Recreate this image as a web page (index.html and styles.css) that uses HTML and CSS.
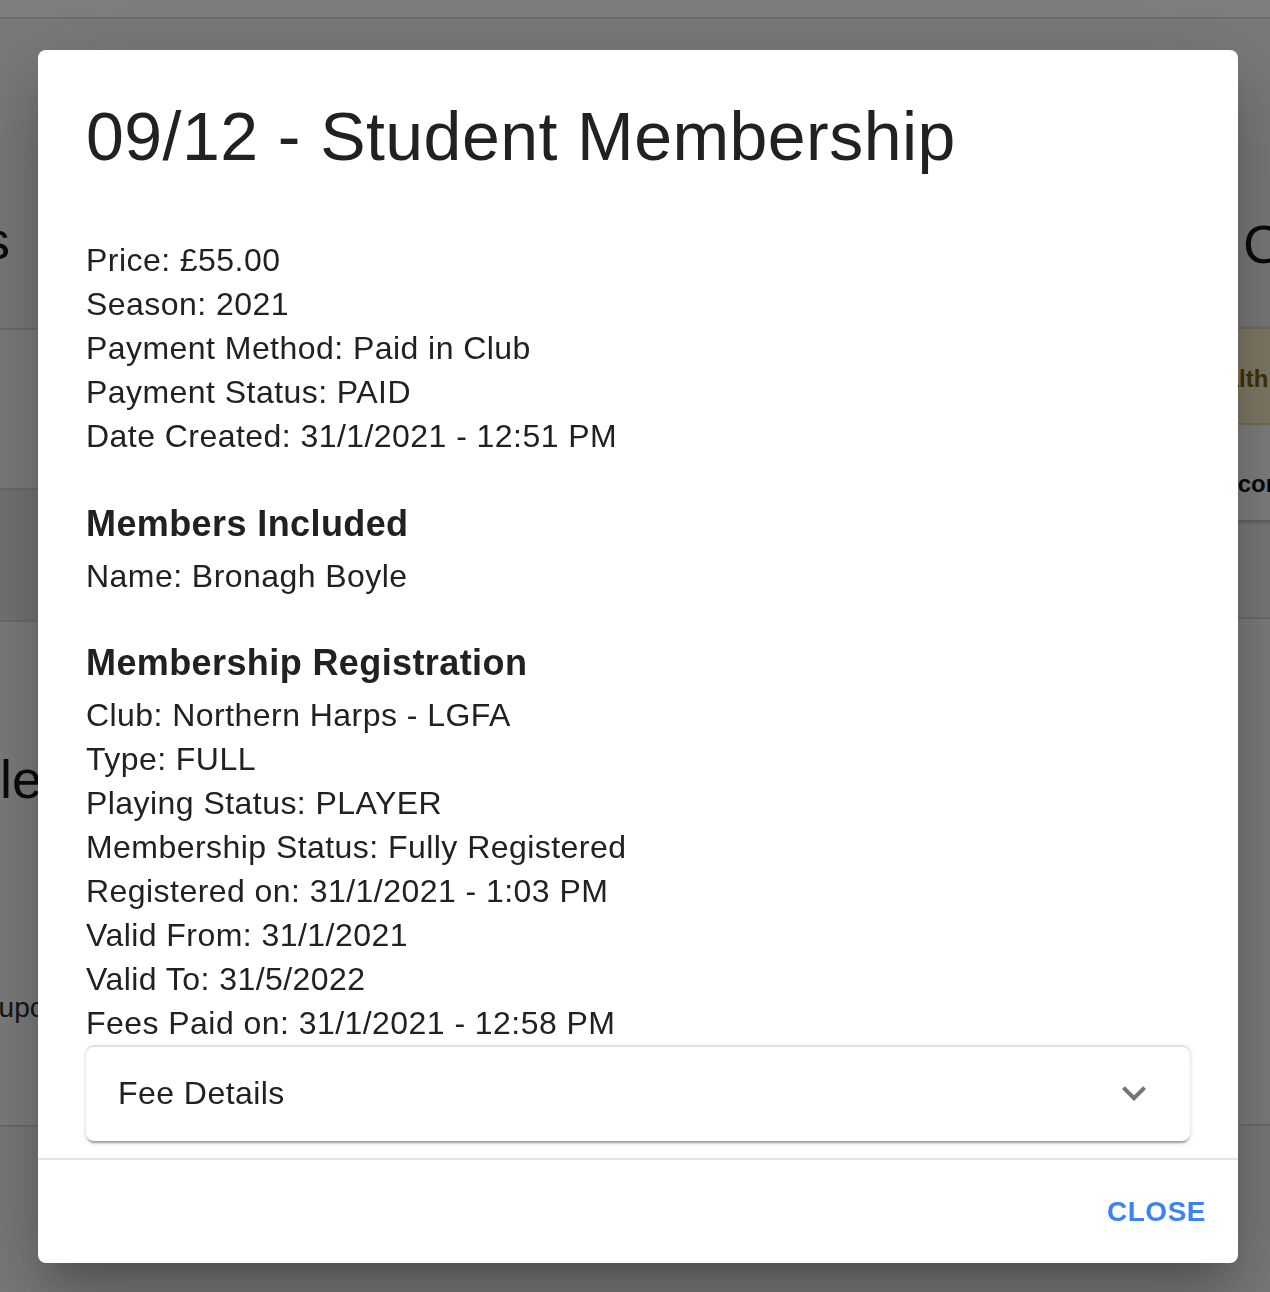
FILE: index.html
```html
<!DOCTYPE html>
<html lang="en">
<head>
<meta charset="utf-8">
<title>09/12 - Student Membership</title>
<link rel="stylesheet" href="styles.css">
</head>
<body>
<div class="page">
  <header class="topbar"></header>
  <div class="cols">
    <div class="col col-left">
      <div class="l-head"><h2 class="bg-title">Memberships</h2></div>
      <div class="l-row l-row-a"></div>
      <div class="l-row l-row-b"></div>
      <div class="l-sec">
        <h2 class="bg-title bg-title-2">Schedule</h2>
        <p class="bg-text">No upcoming fixtures</p>
      </div>
      <div class="l-foot"></div>
    </div>
    <div class="col col-right">
      <div class="r-head"><h2 class="bg-title">Contact</h2></div>
      <div class="r-card">
        <div class="r-alert">Health declaration</div>
        <div class="r-row">Recorded by</div>
      </div>
      <div class="r-sec"></div>
      <div class="r-foot"></div>
    </div>
  </div>
</div>

<div class="backdrop"></div>

<div class="dialog-wrap">
  <div class="dialog" role="dialog" aria-labelledby="dlg-title">
    <h2 class="dialog-title" id="dlg-title">09/12 - Student Membership</h2>
    <div class="dialog-content">
      <p class="line">Price: £55.00</p>
      <p class="line">Season: 2021</p>
      <p class="line">Payment Method: Paid in Club</p>
      <p class="line">Payment Status: PAID</p>
      <p class="line">Date Created: 31/1/2021 - 12:51 PM</p>

      <h3 class="section">Members Included</h3>
      <p class="line">Name: Bronagh Boyle</p>

      <h3 class="section section-2">Membership Registration</h3>
      <p class="line">Club: Northern Harps - LGFA</p>
      <p class="line">Type: FULL</p>
      <p class="line">Playing Status: PLAYER</p>
      <p class="line">Membership Status: Fully Registered</p>
      <p class="line">Registered on: 31/1/2021 - 1:03 PM</p>
      <p class="line">Valid From: 31/1/2021</p>
      <p class="line">Valid To: 31/5/2022</p>
      <p class="line">Fees Paid on: 31/1/2021 - 12:58 PM</p>

      <div class="accordion">
        <div class="acc-summary">
          <span class="acc-label">Fee Details</span>
          <svg class="acc-icon" viewBox="0 0 24 24" width="48" height="48" aria-hidden="true">
            <path d="M16.59 8.59L12 13.17 7.41 8.59 6 10l6 6 6-6z"></path>
          </svg>
        </div>
      </div>
    </div>
    <div class="dialog-actions">
      <button class="btn-text" type="button">Close</button>
    </div>
  </div>
</div>
</body>
</html>
```

FILE: styles.css
```css
html, body {
  margin: 0;
  padding: 0;
}

body {
  width: 1270px;
  height: 1292px;
  overflow: hidden;
  background: #f4f4f4;
  font-family: "Liberation Sans", Arial, Helvetica, sans-serif;
  color: #212121;
}

/* ---------- background page ---------- */
.page {
  width: 1270px;
  height: 1292px;
  overflow: hidden;
}

.topbar {
  height: 17px;
  background: #ffffff;
  border-bottom: 2px solid #dcdcdc;
}

.cols {
  display: flex;
  align-items: flex-start;
  margin-left: -362px;
  width: 2400px;
}

.col {
  flex: 0 0 auto;
  display: flex;
  flex-direction: column;
}

.col-left {
  width: 400px;
}

.col-right {
  width: 600px;
  margin-left: 1062px;
}

.bg-title {
  margin: 0;
  font-size: 54px;
  line-height: 64px;
  font-weight: 400;
  color: #151515;
  white-space: nowrap;
}

.l-head {
  height: 309px;
  box-sizing: border-box;
  padding-top: 189px;
  text-align: right;
  padding-right: 28px;
}

.l-row {
  border-top: 2px solid #dadada;
  box-sizing: border-box;
}

.l-row-a {
  height: 160px;
  background: #fbfbfb;
}

.l-row-b {
  height: 132px;
  background: #e9e9e9;
}

.l-sec {
  height: 505px;
  box-sizing: border-box;
  border-top: 2px solid #dadada;
  background: #fbfbfb;
  padding-top: 125px;
}

.bg-title-2 {
  text-align: right;
  margin-right: -4px;
}

.bg-text {
  margin: 177px 0 0;
  padding-left: 317px;
  font-size: 28px;
  line-height: 40px;
  color: #2a2a2a;
  white-space: nowrap;
}

.l-foot {
  height: 200px;
  border-top: 2px solid #dadada;
  background: #f4f4f4;
}

.r-head {
  height: 308px;
  box-sizing: border-box;
  padding-top: 193px;
  padding-left: 143px;
}

.r-card {
  background: #ffffff;
  box-shadow: 0 2px 4px rgba(0, 0, 0, 0.25);
}

.r-alert {
  border-top: 2px solid #e9dca6;
  border-bottom: 2px solid #e9dca6;
  background: #fff3cd;
  color: #856404;
  font-weight: 700;
  font-size: 24px;
  line-height: 88px;
  padding: 6px 0 0 95px;
  white-space: nowrap;
}

.r-row {
  font-weight: 700;
  font-size: 24px;
  line-height: 40px;
  padding: 39px 0 16px 107px;
  color: #111111;
  white-space: nowrap;
}

.r-sec {
  height: 97px;
}

.r-foot {
  height: 505px;
  border-top: 2px solid #dadada;
  border-bottom: 2px solid #dadada;
  background: #fbfbfb;
}

/* ---------- modal ---------- */
.backdrop {
  position: fixed;
  inset: 0;
  background: rgba(0, 0, 0, 0.5);
}

.dialog-wrap {
  position: fixed;
  inset: 0;
  display: flex;
  align-items: flex-start;
  justify-content: flex-start;
  padding: 50px 0 0 38px;
}

.dialog {
  width: 1200px;
  background: #ffffff;
  border-radius: 8px;
  display: flex;
  flex-direction: column;
  box-shadow:
    0 22px 30px -14px rgba(0, 0, 0, 0.2),
    0 48px 76px 6px rgba(0, 0, 0, 0.14),
    0 18px 92px 16px rgba(0, 0, 0, 0.12);
}

.dialog-title {
  margin: 0;
  padding: 44px 48px 0;
  font-size: 68px;
  line-height: 84px;
  font-weight: 400;
  letter-spacing: 0.45px;
  color: #212121;
  white-space: nowrap;
}

.dialog-content {
  padding: 60px 48px 17px;
  border-bottom: 2px solid #e4e4e4;
}

.line {
  margin: 0;
  font-size: 32px;
  line-height: 44px;
  letter-spacing: 0.45px;
  color: #212121;
  white-space: nowrap;
}

.section {
  margin: 44px 0 8px;
  font-size: 36px;
  line-height: 44px;
  font-weight: 700;
  letter-spacing: 0.4px;
  color: #212121;
}

.section-2 {
  margin-top: 43px;
}

.accordion {
  background: #ffffff;
  border-radius: 8px;
  box-shadow:
    inset 0 2px 0 #e2e2e2,
    0 4px 2px -2px rgba(0, 0, 0, 0.2),
    0 2px 2px 0 rgba(0, 0, 0, 0.14),
    0 2px 6px 0 rgba(0, 0, 0, 0.12);
}

.acc-summary {
  height: 96px;
  display: flex;
  align-items: center;
  justify-content: space-between;
  padding: 0 32px;
}

.acc-label {
  font-size: 32px;
  line-height: 44px;
  letter-spacing: 0.45px;
  color: #212121;
}

.acc-icon {
  display: block;
  fill: #757575;
  flex: 0 0 auto;
}

.dialog-actions {
  height: 103px;
  box-sizing: border-box;
  display: flex;
  align-items: center;
  justify-content: flex-end;
  padding: 0 16px;
}

.btn-text {
  border: 0;
  background: transparent;
  padding: 12px 16px;
  font-family: "Liberation Sans", Arial, Helvetica, sans-serif;
  font-size: 28px;
  line-height: 49px;
  font-weight: 700;
  letter-spacing: 0.5px;
  text-transform: uppercase;
  color: #3b82f6;
  border-radius: 8px;
  cursor: pointer;
}
```
